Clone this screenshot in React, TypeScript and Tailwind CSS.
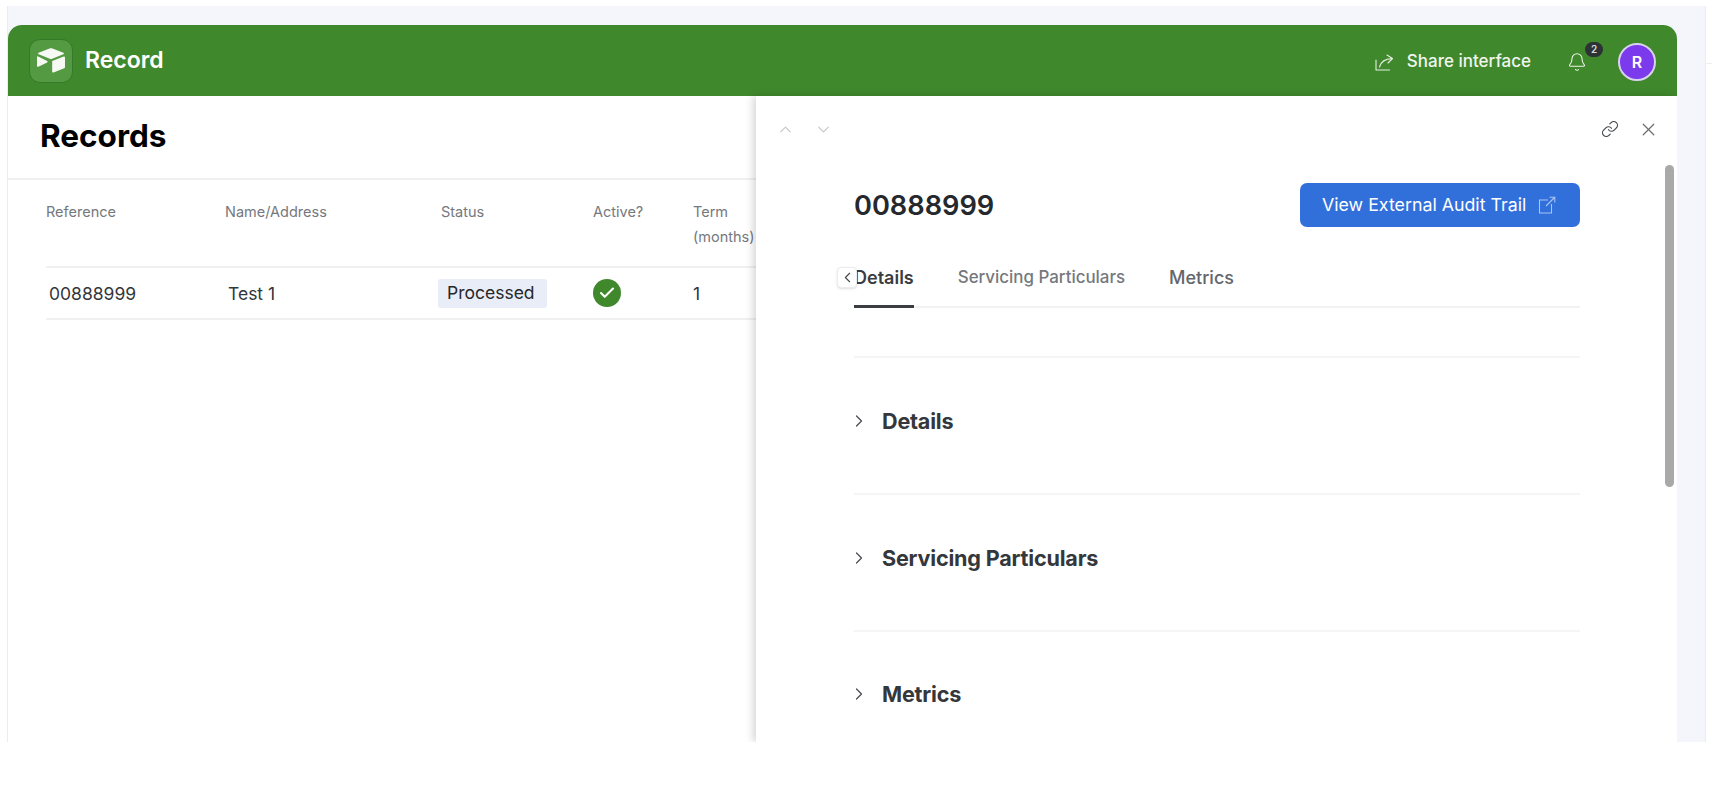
import { Bell, Check, ChevronDown, ChevronLeft, ChevronRight, ChevronUp, Link, X } from "lucide-react";

function Logo() {
  return (
    <svg viewBox="0 0 200 170" className="w-[30px] h-[25px]" fill="#f7f9f5">
      <path d="M90 4 L16 33 c-5 2-5 8 0 10 L92 73 c5 2 11 2 16 0 L184 43 c5-2 5-8 0-10 L110 4 c-6-3-14-3-20 0z" />
      <path d="M108 92 V160 c0 5 5 8 9 6 L190 138 c3-1 5-4 5-7 V64 c0-5-5-8-9-6 L113 86 c-3 1-5 3-5 6z" />
      <path d="M5 62 V122 c0 5 5 8 9 5 L74 98 c4-2 4-7 0-9 L13 57 c-4-2-8 0-8 5z" />
    </svg>
  );
}

function ShareIcon() {
  return (
    <svg viewBox="0 0 20 20" className="w-[20px] h-[20px]" fill="none" stroke="#e6efe2" strokeWidth="1.1" strokeLinecap="round" strokeLinejoin="round">
      <path d="M2 8 L2 18 H15.5" />
      <path d="M13 3 L18.5 6.5 L14 11" />
      <path d="M18 6.6 C11 6.8 7 9.5 5.5 15" />
    </svg>
  );
}

function ExternalIcon() {
  return (
    <svg viewBox="0 0 18 18" className="w-[18px] h-[18px]" fill="none" stroke="#a9c5f3" strokeWidth="1.1">
      <path d="M10 4 H1.5 V17 H13.5 V8" />
      <path d="M8 10 L16.5 1.5 M11.5 1.2 H16.8 V6.5" />
    </svg>
  );
}

function Section({ title }: { title: string }) {
  return (
    <div className="flex items-center h-[137px] pb-[9px] border-b-2 border-[#f5f5f6] last:border-b-0 last:pb-[13px]">
      <ChevronRight className="w-[20px] h-[20px] text-[#4a4d52] ml-[-5px]" strokeWidth={1.5} />
      <span className="ml-[13px] text-[21.6px] font-bold tracking-[-0.2px] text-[#34373b]">{title}</span>
    </div>
  );
}

export default function App() {
  return (
    <div className="relative w-[1712px] h-[788px] bg-white overflow-hidden font-['Inter',sans-serif] pt-[6px] pl-[7px]">
      <div className="absolute left-[1706px] top-[63px] w-[6px] h-[1px] bg-[#efeff1]" />
      <div className="w-[1699px] h-[736px] bg-[#f4f6fb] border-l border-r border-[#ececef] pt-[19px] flex flex-col">
        <div className="w-[1669px] flex-1 min-h-0 bg-white rounded-t-[14px] flex flex-col overflow-hidden">
          <header className="h-[71px] shrink-0 bg-[#3f882c] flex items-center pl-[21px] pr-[21px] text-white">
            <div className="w-[44px] h-[44px] rounded-[11px] bg-[#549a42] border border-[#37792a] flex items-center justify-center">
              <Logo />
            </div>
            <span className="ml-[12px] text-[23px] font-semibold">Record</span>
            <div className="ml-auto flex items-center pt-[2px]">
              <ShareIcon />
              <span className="ml-[13px] text-[17px] font-medium text-[#f0f5ee]">Share interface</span>
              <div className="ml-[36px] relative">
                <Bell className="w-[20px] h-[20px] text-[#eef4ec]" strokeWidth={1.3} />
                <span className="absolute top-[-10px] left-[18px] w-[18px] h-[15px] rounded-full bg-[#2c3236] text-[10px] font-semibold leading-[15px] text-center text-[#d8dadb]">2</span>
              </div>
              <div className="ml-[31px] w-[38px] h-[38px] rounded-full bg-[#7c3aed] border-2 border-[#d9d2ee] flex items-center justify-center text-[16px] font-semibold">R</div>
            </div>
          </header>
          <div className="flex-1 min-h-0 flex">
            <section className="flex-1 min-w-0 overflow-hidden">
              <div className="h-[84px] border-b-2 border-[#f0f0f1] pl-[32px] pt-[20px]">
                <h1 className="text-[31.5px] leading-[40px] font-bold text-black">Records</h1>
              </div>
              <div className="ml-[38px]">
                <div className="flex h-[88px] w-[800px] border-b-2 border-[#f0f0f1] pt-[19px] text-[14.5px] leading-[25px] text-[#75787d]">
                  <div className="w-[179px]">Reference</div>
                  <div className="w-[216px]">Name/Address</div>
                  <div className="w-[152px]">Status</div>
                  <div className="w-[100px]">Active?</div>
                  <div className="w-[100px]">Term<br />(months)</div>
                </div>
                <div className="flex items-center h-[52px] w-[800px] border-b-2 border-[#f0f0f1] text-[17.5px] text-[#33363a]">
                  <div className="w-[179px] pl-[3px] pt-[2px]">00888999</div>
                  <div className="w-[213px] pl-[3px] pt-[2px]">Test 1</div>
                  <div className="w-[155px]">
                    <span className="inline-flex items-center h-[29px] w-[109px] pl-[9px] rounded-[3px] bg-[#e9edf8] text-[#26282b]">Processed</span>
                  </div>
                  <div className="w-[100px]">
                    <span className="flex items-center justify-center w-[28px] h-[28px] rounded-full bg-[#3f882c]">
                      <Check className="w-[18px] h-[18px] text-white" strokeWidth={2.8} />
                    </span>
                  </div>
                  <div className="w-[100px] pt-[2px]">1</div>
                </div>
              </div>
            </section>
            <aside className="w-[921px] shrink-0 relative bg-white shadow-[-3px_0_8px_rgba(0,0,0,0.16)]">
              <div className="flex items-center h-[66px] pl-[20px] pr-[18px]">
                <ChevronUp className="w-[19px] h-[19px] text-[#c3c5c8]" strokeWidth={1.4} />
                <ChevronDown className="ml-[19px] w-[19px] h-[19px] text-[#c3c5c8]" strokeWidth={1.4} />
                <Link className="ml-auto w-[18px] h-[18px] text-[#45484c]" strokeWidth={1.6} />
                <X className="ml-[19px] w-[21px] h-[21px] text-[#6b6e72]" strokeWidth={1.4} />
              </div>
              <div className="pl-[98px] pr-[97px]">
                <div className="flex items-center justify-between h-[44px] mt-[21px]">
                  <h2 className="text-[27.2px] font-semibold text-[#25282c] pt-[2px]">00888999</h2>
                  <div className="flex items-center w-[280px] h-[44px] pl-[22px] rounded-[7px] bg-[#316fdb] text-white text-[17.8px]">
                    View External Audit Trail
                    <span className="ml-[12px]"><ExternalIcon /></span>
                  </div>
                </div>
                <div className="relative flex items-stretch h-[55px] mt-[26px] gap-[44px] border-b-2 border-[#f2f2f3] text-[16.9px] font-medium text-[#75787d]">
                  <span className="flex items-center pb-[4px] -mb-[2px] border-b-[3px] border-[#3a3d41] text-[18px] font-semibold text-[#3a3d41]">Details</span>
                  <span className="flex items-center pb-[4px]">Servicing Particulars</span>
                  <span className="flex items-center pb-[4px] text-[18px] text-[#63666a]">Metrics</span>
                  <span className="absolute left-[-17px] top-[14px] w-[20px] h-[21px] rounded-[4px] bg-white border border-[#ececee] shadow-sm flex items-center justify-center">
                    <ChevronLeft className="w-[17px] h-[17px] text-[#45484c]" strokeWidth={1.6} />
                  </span>
                </div>
                <div className="h-[50px] border-b-2 border-[#f5f5f6]" />
                <Section title="Details" />
                <Section title="Servicing Particulars" />
                <Section title="Metrics" />
              </div>
              <div className="absolute right-[3px] top-[69px] w-[9px] h-[322px] rounded-full bg-[#a9a9a9]" />
            </aside>
          </div>
        </div>
      </div>
    </div>
  );
}
